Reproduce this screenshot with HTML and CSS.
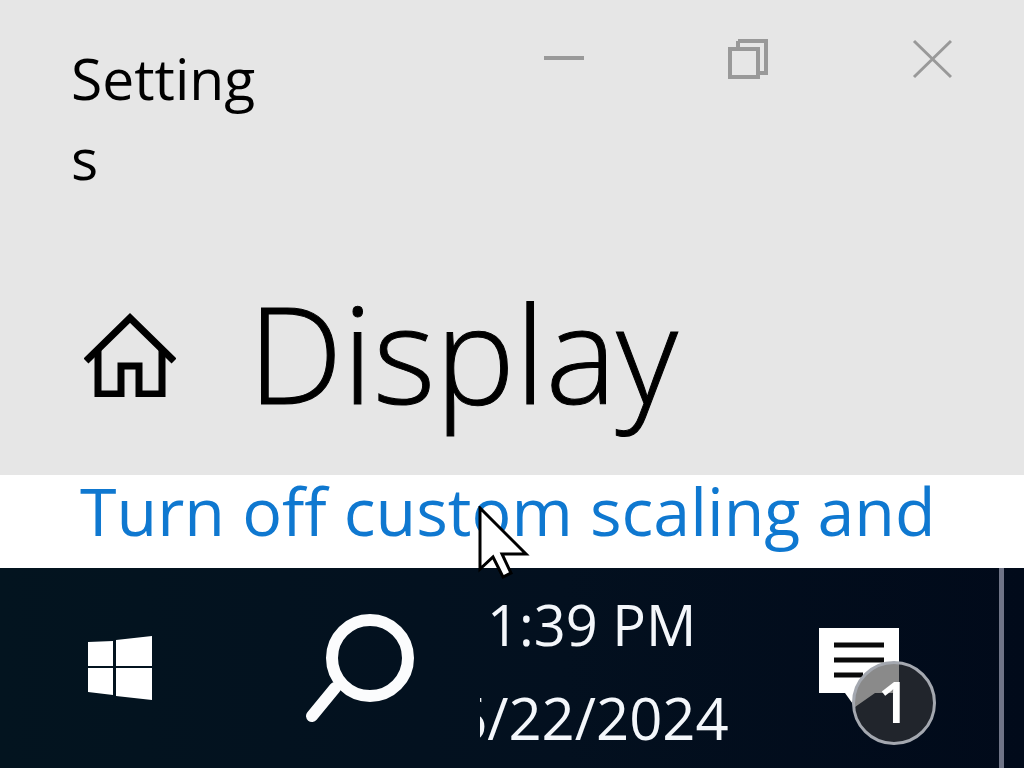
FILE: index.html
```html
<!DOCTYPE html>
<html lang="en">
<head>
<meta charset="utf-8">
<title>Settings</title>
<link rel="stylesheet" href="styles.css">
</head>
<body>
<div class="screen">
  <header class="window-head">
    <div class="titlebar">
      <div class="app-title">Settings</div>
      <div class="window-controls">
        <svg class="ctl ctl-min" viewBox="0 0 40 40"><rect x="0" y="17" width="40" height="4"/></svg>
        <svg class="ctl ctl-restore" viewBox="0 0 40 40"><path class="ctl-line" d="M10 2H38V34H32M10 2V8"/><rect class="ctl-line" x="2" y="10" width="28" height="28"/></svg>
        <svg class="ctl ctl-close" viewBox="0 0 40 40"><path class="ctl-thin" d="M2 2L39 38M39 2L2 38"/></svg>
      </div>
    </div>
    <div class="page-head">
      <svg class="home" viewBox="0 0 92 84"><path d="M2 48L46 5L90 48"/><path d="M14 37V81H37V53H55V81H78V37"/></svg>
      <h1 class="page-title">Display</h1>
    </div>
  </header>
  <div class="link-row"><a class="link">Turn off custom scaling and</a></div>
  <footer class="taskbar">
    <svg class="start" viewBox="0 0 64 64"><path d="M0 6L25 5V30H0ZM28 4L64 0V30H28ZM0 32H25V59L0 56ZM28 32H64V64L28 60Z"/></svg>
    <svg class="search" viewBox="0 0 110 116"><circle cx="66" cy="44" r="38"/><path d="M31 74L8 102"/></svg>
    <div class="clock">
      <div class="clock-time">1:39 PM</div>
      <div class="clock-date">6/22/2024</div>
    </div>
    <div class="notify">
      <svg class="bubble" viewBox="0 0 80 80"><path class="bubble-shape" d="M0 0H80V65H56L36 79L26 65H0Z"/><path class="bubble-lines" d="M15 17H65M15 32H65M15 47H44"/></svg>
      <div class="badge">1</div>
    </div>
    <div class="edge"></div>
  </footer>
  <svg class="cursor" viewBox="0 0 52 74"><path d="M2 2V63L15 51L25 71L33 67L24 48H48Z"/></svg>
</div>
</body>
</html>
```
FILE: styles.css
```css
html, body { margin: 0; padding: 0; }
body { width: 1024px; height: 768px; overflow: hidden; font-family: "Open Sans", "Noto Sans", sans-serif; }
.screen { position: relative; width: 1024px; height: 768px; display: flex; flex-direction: column; overflow: hidden; }

.window-head { height: 475px; background: #e6e6e6; color: #000; }
.titlebar { display: flex; justify-content: space-between; height: 272px; padding: 38px 72px 0 71px; box-sizing: border-box; }
.app-title { width: 190px; font-size: 57px; line-height: 80px; word-break: break-all; }
.window-controls { display: flex; gap: 144px; margin-top: 1px; height: 40px; }
.ctl { width: 40px; height: 40px; display: block; }
.ctl-min rect { fill: #999; }
.ctl-line { fill: none; stroke: #999; stroke-width: 4; }
.ctl-thin { fill: none; stroke: #999; stroke-width: 3; }

.page-head { display: flex; align-items: center; height: 160px; padding-left: 84px; }
.home { width: 92px; height: 84px; margin-top: 6px; flex: none; }
.home path { fill: none; stroke: #000; stroke-width: 7; }
.page-title { margin: 0 0 0 72px; font-size: 134px; font-weight: 300; line-height: 160px; -webkit-text-stroke: 1px #000; }

.link-row { height: 93px; background: #fff; padding-left: 80px; overflow: hidden; }
.link { display: block; color: #0f78d0; font-size: 66.3px; line-height: 71px; white-space: nowrap; }

.taskbar { flex: 1; display: flex; align-items: flex-start; background: linear-gradient(90deg, #03141f, #03101f 55%, #010a1a); color: #f4f7fb; }
.start { width: 64px; height: 64px; margin: 68px 0 0 88px; flex: none; }
.start path { fill: #fff; }
.search { width: 110px; height: 116px; margin: 46px 0 0 152px; flex: none; }
.search circle, .search path { fill: none; stroke: #fbfcfd; stroke-width: 12; stroke-linecap: round; }
.clock { width: 250px; margin: 10px 0 0 66px; overflow: hidden; flex: none; line-height: 93px; white-space: nowrap; }
.clock-time { padding-left: 7px; font-size: 56px; }
.clock-date { margin-left: -26px; font-size: 58px; }
.notify { position: relative; width: 118px; height: 140px; margin: 60px 0 0 89px; flex: none; }
.bubble { display: block; width: 80px; height: 80px; }
.bubble-shape { fill: #fff; }
.bubble-lines { fill: none; stroke: #0a0a0a; stroke-width: 5; }
.badge { position: absolute; left: 33px; top: 33px; width: 84px; height: 84px; box-sizing: border-box; border: 3px solid #a4a8b0; border-radius: 50%; background: rgba(56,56,56,.59); color: #fff; font-size: 58px; font-weight: 600; line-height: 74px; text-align: center; }
.edge { width: 5px; height: 200px; margin-left: 62px; background: #6f7487; flex: none; }

.cursor { position: absolute; left: 478px; top: 506px; width: 52px; height: 74px; }
.cursor path { fill: #fff; stroke: #000; stroke-width: 3; }
```
